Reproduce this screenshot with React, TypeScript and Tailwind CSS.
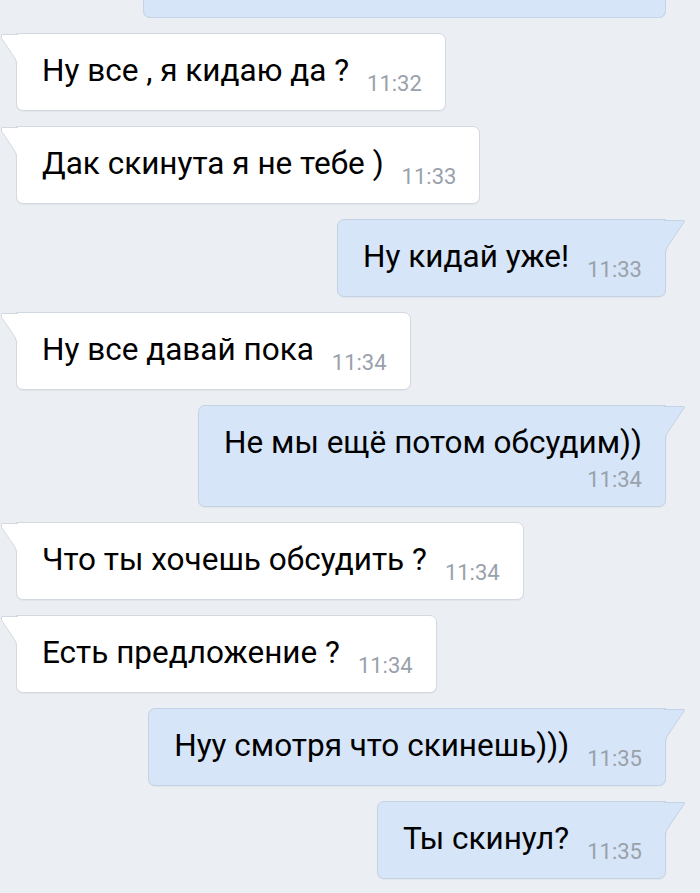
import React from "react";

type Msg = { out: boolean; text: string; time: string; wrap?: boolean };

const msgs: Msg[] = [
  { out: false, text: "Ну все , я кидаю да ?", time: "11:32" },
  { out: false, text: "Дак скинута я не тебе )", time: "11:33" },
  { out: true, text: "Ну кидай уже!", time: "11:33" },
  { out: false, text: "Ну все давай пока", time: "11:34" },
  { out: true, text: "Не мы ещё потом обсудим))", time: "11:34", wrap: true },
  { out: false, text: "Что ты хочешь обсудить ?", time: "11:34" },
  { out: false, text: "Есть предложение ?", time: "11:34" },
  { out: true, text: "Нуу смотря что скинешь)))", time: "11:35" },
  { out: true, text: "Ты скинул?", time: "11:35" },
];

function InTail() {
  return (
    <svg
      className="absolute top-0 left-[-16px]"
      width="17"
      height="30"
      viewBox="0 0 17 30"
    >
      <path d="M17,0 L1,0 Q0,0 0,1 L0,4 L13.5,23.5 Q16,27 16,30 L17,30 Z" fill="#ffffff" />
      <path
        d="M17,0.5 L1,0.5 Q0.5,0.5 0.5,1 L0.5,4.2 L13.6,23.6 Q15.5,26.8 15.5,30"
        fill="none"
        stroke="#d3d9e0"
        strokeWidth="1"
      />
    </svg>
  );
}

function OutTail() {
  return (
    <svg
      className="absolute top-0 left-[calc(100%-1px)]"
      width="22"
      height="34"
      viewBox="0 0 22 34"
    >
      <path d="M0,0 L19.5,0 Q21.5,0 20.5,1.6 L3.2,27.5 Q1,30.5 1,34 L0,34 Z" fill="#d6e5f7" />
      <path
        d="M0,0.5 L19.5,0.5 Q21,0.5 20.1,1.9 L2.9,27.6 Q1.5,30.6 1.5,34"
        fill="none"
        stroke="#c3d2e4"
        strokeWidth="1"
      />
    </svg>
  );
}

function Bubble({ m }: { m: Msg }) {
  const body = m.out
    ? "bg-[#d6e5f7] border-[#c3d2e4] rounded-[7px] rounded-tr-none"
    : "bg-white border-[#d3d9e0] rounded-[7px] rounded-tl-none";
  return (
    <div className={m.out ? "flex justify-end pr-[34px]" : "flex justify-start pl-[16px]"}>
      <div
        className={`relative border ${body} shadow-[0_1px_1px_rgba(0,0,0,0.04)] pl-[25px] pr-[23px] pt-[20px] ${
          m.wrap ? "pb-[14px]" : "pb-[22px]"
        }`}
      >
        {m.out ? <OutTail /> : <InTail />}
        {m.wrap ? (
          <div className="flex flex-col">
            <div className="text-[31.5px] leading-[34px] text-black">{m.text}</div>
            <div className="mt-[8px] self-end text-[22px] leading-[24px] text-[#99a1ab]">{m.time}</div>
          </div>
        ) : (
          <div className="flex items-baseline">
            <span className="text-[31.5px] leading-[34px] text-black whitespace-nowrap">{m.text}</span>
            <span className="ml-[18px] translate-y-[10px] text-[22px] leading-[24px] text-[#99a1ab]">
              {m.time}
            </span>
          </div>
        )}
      </div>
    </div>
  );
}

export default function App() {
  return (
    <div
      className="min-h-[893px] w-[700px] bg-[#ebeef2] overflow-hidden"
      style={{ fontFamily: "Roboto, 'Noto Sans', sans-serif" }}
    >
      <div className="flex flex-col gap-[15px]">
        <div className="flex justify-end pr-[34px]">
          <div className="h-[18px] w-[523px] bg-[#d6e5f7] border border-t-0 border-[#c3d2e4] rounded-b-[7px]" />
        </div>
        {msgs.map((m, i) => (
          <Bubble key={i} m={m} />
        ))}
      </div>
    </div>
  );
}
